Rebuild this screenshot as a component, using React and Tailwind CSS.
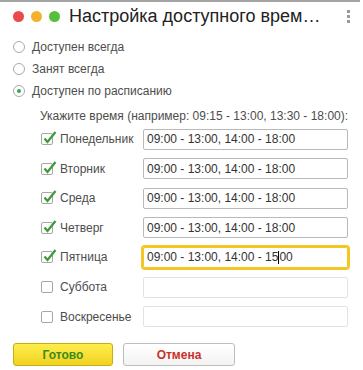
const days = [
  { name: "Понедельник", value: "09:00 - 13:00, 14:00 - 18:00", on: true, h: "h-[30px]" },
  { name: "Вторник", value: "09:00 - 13:00, 14:00 - 18:00", on: true, h: "h-[29px]" },
  { name: "Среда", value: "09:00 - 13:00, 14:00 - 18:00", on: true, h: "h-[30px]" },
  { name: "Четверг", value: "09:00 - 13:00, 14:00 - 18:00", on: true, h: "h-[29px]" },
  { name: "Пятница", value: "09:00 - 13:00, 14:00 - 15:00", on: true, focus: true, h: "h-[30px]" },
  { name: "Суббота", value: "", on: false, h: "h-[30px]" },
  { name: "Воскресенье", value: "", on: false, h: "h-[29px]" },
];

function Radio({ checked, label }) {
  return (
    <div className="flex items-center h-[22px] pl-[13px]">
      <span className="w-[12px] h-[12px] rounded-full border border-[#a9a9a9] bg-white flex items-center justify-center">
        {checked && <span className="w-[4px] h-[4px] rounded-full bg-[#3aa64a]" />}
      </span>
      <span className="ml-[7px] text-[12px] text-[#4d4d4d]">{label}</span>
    </div>
  );
}

function Check({ on }) {
  return (
    <span className="relative w-[12px] h-[12px] border border-[#a6a6a6] rounded-[2px] bg-white shrink-0">
      {on && (
        <svg className="absolute -top-[4px] left-[0px]" width="15" height="15" viewBox="0 0 15 15">
          <path d="M2.5 8.5 L5.5 12 L13.5 2" fill="none" stroke="#3d9a3d" strokeWidth="2.3" />
        </svg>
      )}
    </span>
  );
}

function DayRow({ day }) {
  return (
    <div className={`flex items-center ${day.h} pl-[41px]`}>
      <Check on={day.on} />
      <span className="ml-[7px] w-[83px] text-[12px] text-[#4d4d4d]">{day.name}</span>
      {day.focus ? (
        <div className="w-[205px] h-[21px] border border-[#f5c623] outline-2 outline-[#f5c623] rounded-[2px] flex items-center pl-[3px] text-[12px] text-[#333]">
          09:00 - 13:00, 14:00 - 15<span className="inline-block w-px h-[13px] bg-black" />00
        </div>
      ) : (
        <div
          className={`w-[205px] h-[21px] border rounded-[2px] flex items-center pl-[3px] text-[12px] text-[#333] ${
            day.value ? "border-[#b9b9b9]" : "border-[#e3e3e3]"
          }`}
        >
          {day.value}
        </div>
      )}
    </div>
  );
}

export default function App() {
  return (
    <div className="w-[363px] h-[370px] bg-white font-['Liberation_Sans',Arial,sans-serif] overflow-hidden">
      <div className="w-[360px] h-[2px] bg-[#a3a3a3]" />
      <div className="flex items-center h-[28px] pl-[13px] pr-[13px]">
        <span className="w-[11px] h-[11px] rounded-full bg-[#ea4a4c]" />
        <span className="ml-[7px] w-[11px] h-[11px] rounded-full bg-[#f4b22c]" />
        <span className="ml-[7px] w-[11px] h-[11px] rounded-full bg-[#56bf3c]" />
        <span className="ml-[9px] text-[18px] text-[#222] whitespace-nowrap">Настройка доступного врем…</span>
        <span className="ml-auto flex flex-col gap-[2px]">
          <span className="w-[3px] h-[3px] bg-[#9a9a9a]" />
          <span className="w-[3px] h-[3px] bg-[#9a9a9a]" />
          <span className="w-[3px] h-[3px] bg-[#9a9a9a]" />
        </span>
      </div>
      <div className="mt-[6px]">
        <Radio label="Доступен всегда" />
        <Radio label="Занят всегда" />
        <Radio label="Доступен по расписанию" checked />
      </div>
      <div className="mt-[6px] pl-[40px] h-[16px] leading-[16px] text-[12px] text-[#4d4d4d] whitespace-nowrap">
        Укажите время (например: 09:15 - 13:00, 13:30 - 18:00):
      </div>
      <div>
        {days.map((d) => (
          <DayRow key={d.name} day={d} />
        ))}
      </div>
      <div className="flex gap-[10px] pl-[13px] mt-[12px]">
        <button className="w-[100px] h-[23px] rounded-[3px] border border-[#c9ad12] bg-gradient-to-b from-[#fdee4b] to-[#f1d21d] text-[12px] font-bold text-[#3e8a1a]">
          Готово
        </button>
        <button className="w-[112px] h-[23px] rounded-[3px] border border-[#bdbdbd] bg-gradient-to-b from-white to-[#f3f3f3] text-[12px] font-bold text-[#c9302c]">
          Отмена
        </button>
      </div>
    </div>
  );
}
